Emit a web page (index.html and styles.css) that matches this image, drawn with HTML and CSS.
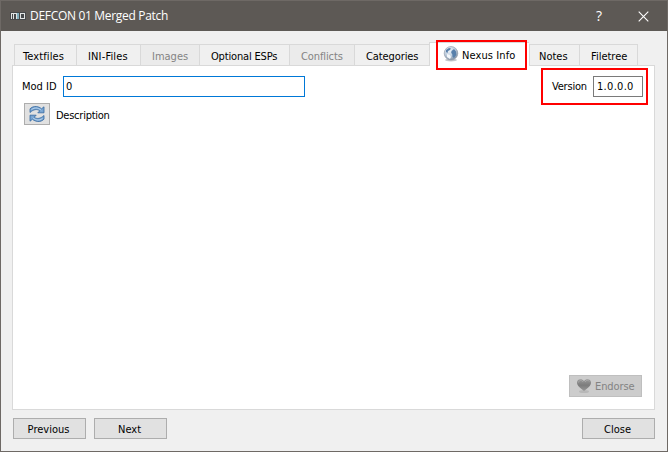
FILE: index.html
```html
<!DOCTYPE html>
<html lang="en">
<head>
<meta charset="utf-8">
<title>DEFCON 01 Merged Patch</title>
<link rel="stylesheet" href="styles.css">
</head>
<body>
<div class="window">
  <header class="titlebar">
    <svg class="app-icon" width="16" height="10" viewBox="0 0 16 10" shape-rendering="crispEdges">
      <rect y="1" width="16" height="8" fill="#45484a"/>
      <path d="M1 2h6v1H1zM1 3h1v5H1zM3 3h1v5H3zM6 3h1v5H6zM10 2h5v1h-5zM10 7h5v1h-5zM10 3h1v4h-1zM14 3h1v4h-1z" fill="#e0e3e3"/>
      <path d="M7 2h2v6H7z" fill="#80aebd"/>
    </svg>
    <h1 class="title">DEFCON 01 Merged Patch</h1>
    <span class="help">?</span>
    <svg class="close-icon" width="11" height="11" viewBox="0 0 11 11"><path d="M.7.7l9.600 9.600M10.300.7L.7 10.300" stroke="#fff" stroke-width="1.100"/></svg>
  </header>
  <nav class="tabs">
    <div class="tab textfiles"><span>Textfiles</span></div>
    <div class="tab ini"><span>INI-Files</span></div>
    <div class="tab images disabled"><span>Images</span></div>
    <div class="tab esps"><span>Optional ESPs</span></div>
    <div class="tab conflicts disabled"><span>Conflicts</span></div>
    <div class="tab categories"><span>Categories</span></div>
    <div class="tab nexus active">
      <svg width="16" height="16" viewBox="0 0 16 16">
        <defs><radialGradient id="globe" cx=".4" cy=".3" r=".7"><stop offset="0" stop-color="#edf3f9"/><stop offset=".6" stop-color="#bccbdb"/><stop offset="1" stop-color="#8290a3"/></radialGradient></defs>
        <ellipse cx="8" cy="14" rx="6" ry="1.500" fill="#c5c8cc"/>
        <circle cx="8" cy="7.300" r="6.800" fill="url(#globe)" stroke="#8e98a6" stroke-width=".6"/>
        <path d="M3 4l3-2 2 .5-1 1.500-2 1-.5 2L3 6zM8.500 5l2.500-2 2 2.500.3 3.500-2.300 3-1.500-1-.3-3-1-1z" fill="#5880ab"/>
        <path d="M4 8l3 1 1 2-1 2-3-2z" fill="#f4f8fb"/>
      </svg>
      <span>Nexus Info</span>
      <i class="mark mark-tab"></i>
    </div>
    <div class="tab notes"><span>Notes</span></div>
    <div class="tab filetree"><span>Filetree</span></div>
  </nav>
  <main class="pane">
    <div class="fields">
      <label class="mod-label">Mod ID</label>
      <div class="input mod">0</div>
      <div class="version-group">
        <span class="version-label">Version</span>
        <div class="input version">1.0.0.0</div>
        <i class="mark mark-version"></i>
      </div>
    </div>
    <div class="description">
      <button class="refresh" aria-label="Refresh">
        <svg width="16" height="16" viewBox="0 0 16 16">
          <g fill="#78a5d3" stroke="#34679f" stroke-width=".8" stroke-linejoin="round">
            <path d="M1 6.500V2.800C3.500.3 7-.2 10 1.200c1 .3 1.800.9 2.500 1.600L15 .8v6H8.800l2-2C8 2.700 4.500 3.300 1 6.500z"/>
            <path d="M15 9.500v3.700c-2.500 2.500-6 3-9 1.600-1-.3-1.800-.9-2.500-1.600L1 15.200v-6h6.200l-2 2c2.800 2.100 6.300 1.500 9.800-1.700z"/>
          </g>
          <path d="M2.500 3.500C6 1.300 9 1.700 12.300 4.200M13.500 12.500C10 14.700 7 14.300 3.700 11.800" fill="none" stroke="#c4dbef" stroke-width=".8"/>
        </svg>
      </button>
      <span class="desc-label">Description</span>
    </div>
    <button class="endorse" disabled>
      <svg width="16" height="16" viewBox="0 0 16 16">
        <defs><linearGradient id="heart" x2="0" y2="1"><stop stop-color="#999"/><stop offset=".5" stop-color="#7c7c7c"/><stop offset="1" stop-color="#979797"/></linearGradient></defs>
        <ellipse cx="8" cy="13.500" rx="5" ry="1.500" fill="#b8b8b8"/>
        <path d="M8 13C6 11 1 8.200 1 4.700 1 .8 6 .3 8 3.200 10 .3 15 .8 15 4.700c0 3.500-5 6.300-7 8.300z" fill="url(#heart)"/>
        <path d="M2.500 4.500C3 1.800 6 2 7 4M9 4c1-2 3.500-2.300 4.200-.5" fill="none" stroke="#a8a8a8"/>
      </svg>
      <span>Endorse</span>
    </button>
  </main>
  <footer class="actions">
    <button class="button previous">Previous</button>
    <button class="button next">Next</button>
    <button class="button close">Close</button>
  </footer>
</div>
</body>
</html>
```
FILE: styles.css
```css
* { box-sizing: border-box; }
body {
  margin: 0;
  font: 11px/14px "DejaVu Sans Condensed", "DejaVu Sans", sans-serif;
  font-stretch: condensed;
  color: #000;
}
.window {
  width: 668px;
  height: 452px;
  display: flex;
  flex-direction: column;
  background: #f0f0f0;
  border: 1px solid #6e6965;
}
.titlebar {
  height: 30px;
  display: flex;
  align-items: center;
  padding: 0 18px 0 9px;
  background: #5d5955;
  color: #fff;
}
.app-icon { margin-right: 4px; }
.title {
  margin: 0;
  flex: 1;
  font: 12px/16px "Open Sans", sans-serif;
  letter-spacing: -.31px;
}
.help { font: 14px/16px "Open Sans", sans-serif; margin-right: 36px; }
.tabs {
  height: 34px;
  display: flex;
  align-items: flex-end;
  padding-left: 13px;
}
.tab {
  position: relative;
  height: 21px;
  padding: 5px 0 0 8px;
  border: solid #d9d9d9;
  border-width: 1px 0 0 1px;
  white-space: nowrap;
}
.disabled { color: #838383; background: #ebebeb; }
.textfiles { width: 62px; letter-spacing: .1px; }
.ini { width: 64px; padding-left: 11px; letter-spacing: .15px; }
.images { width: 59px; padding-left: 11px; }
.esps { width: 90px; padding-left: 11px; letter-spacing: -.17px; }
.conflicts { width: 65px; padding-left: 11px; letter-spacing: -.1px; }
.categories { width: 75px; padding-left: 11px; letter-spacing: -.1px; }
.nexus { width: 100px; letter-spacing: .1px; }
.notes { width: 50px; padding-left: 9px; }
.filetree { width: 59px; padding-left: 11px; border-right-width: 1px; }
.active {
  display: flex;
  gap: 3px;
  height: 24px;
  margin-bottom: -1px;
  padding: 3px 0 0 13px;
  background: #fff;
  z-index: 1;
}
.active span { padding-top: 3px; }
.mark { position: absolute; border: 2px solid #f00; }
.mark-tab { left: 6px; top: -3px; width: 91px; height: 30px; }
.pane {
  width: 643px;
  height: 345px;
  margin-left: 11px;
  padding: 10px 11px 11px 9px;
  display: flex;
  flex-direction: column;
  background: #fff;
  border: 1px solid #d9d9d9;
}
.fields { display: flex; align-items: center; height: 21px; }
.mod-label { width: 41px; }
.input {
  height: 21px;
  padding: 3px 3px;
  border: 1px solid #7a7a7a;
  background: #fff;
}
.mod { width: 242px; border-color: #0078d7; padding-left: 2px; }
.version-group {
  position: relative;
  display: flex;
  align-items: center;
  margin-left: auto;
}
.version-label { width: 41px; letter-spacing: -.2px; }
.version { width: 50px; letter-spacing: .3px; }
.mark-version { left: -11px; top: -8px; width: 107px; height: 37px; }
.description { display: flex; align-items: center; gap: 6px; margin: 6px 0 0 2px; }
.desc-label { padding-top: 3px; letter-spacing: -.25px; }
button {
  margin: 0;
  padding: 0;
  font: inherit;
  color: #000;
  background: #e1e1e1;
  border: 1px solid #adadad;
}
.refresh { width: 26px; height: 22px; display: flex; align-items: center; justify-content: center; }
.endorse {
  width: 73px;
  height: 22px;
  display: flex;
  align-items: center;
  gap: 3px;
  padding-left: 6px;
  margin: auto 1px 1px auto;
  color: #838383;
  background: #ccc;
  border-color: #bfbfbf;
  letter-spacing: -.1px;
}
.endorse span { padding-top: 2px; }
.actions { display: flex; gap: 8px; padding: 8px 12px 0; }
.button { width: 73px; height: 21px; padding: 2px 2px 0 0; }
.close { margin-left: auto; }
```
